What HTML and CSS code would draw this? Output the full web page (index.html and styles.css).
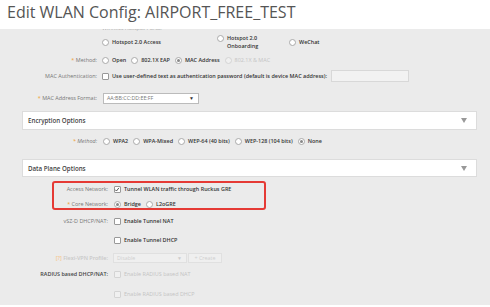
FILE: index.html
```html
<!DOCTYPE html>
<html>
<head>
<meta charset="utf-8">
<link rel="stylesheet" href="styles.css">
</head>
<body>
<h1 class="title">Edit WLAN Config: AIRPORT_FREE_TEST</h1>
<div class="panel">
  <div class="row clip-row">
    <span class="lbl"></span>
    <span class="ctl faded">Wireless Hotspot Portal</span>
  </div>
  <div class="row row-top">
    <span class="lbl"></span>
    <div class="grid3">
      <span class="opt"><i class="radio"></i>Hotspot 2.0 Access</span>
      <span class="opt opt-top"><i class="radio"></i><span>Hotspot 2.0<br>Onboarding</span></span>
      <span class="opt"><i class="radio"></i>WeChat</span>
    </div>
  </div>
  <div class="row">
    <span class="lbl"><b class="req">*</b> Method:</span>
    <div class="opts">
      <span class="opt"><i class="radio"></i>Open</span>
      <span class="opt"><i class="radio"></i>802.1X EAP</span>
      <span class="opt"><i class="radio on"></i>MAC Address</span>
      <span class="opt dis"><i class="radio"></i>802.1X &amp; MAC</span>
    </div>
  </div>
  <div class="row">
    <span class="lbl">MAC Authentication:</span>
    <div class="opts">
      <span class="opt"><i class="check"></i>Use user-defined text as authentication password (default is device MAC address):</span>
      <span class="field"></span>
    </div>
  </div>
  <div class="row row-format">
    <span class="lbl"><b class="req">*</b> MAC Address Format:</span>
    <span class="select"><span>AA:BB:CC:DD:EE:FF</span><b class="caret">&#9660;</b></span>
  </div>

  <div class="section sec-enc"><span>Encryption Options</span><b class="tri"></b></div>
  <div class="row row-enc">
    <span class="lbl"><b class="req">*</b> Method:</span>
    <div class="opts">
      <span class="opt"><i class="radio"></i>WPA2</span>
      <span class="opt"><i class="radio"></i>WPA-Mixed</span>
      <span class="opt"><i class="radio"></i>WEP-64 (40 bits)</span>
      <span class="opt"><i class="radio"></i>WEP-128 (104 bits)</span>
      <span class="opt"><i class="radio on"></i>None</span>
    </div>
  </div>

  <div class="section sec-dp"><span>Data Plane Options</span><b class="tri"></b></div>
  <div class="mark">
    <div class="row2 row-an">
      <span class="lbl2">Access Network:</span>
      <span class="opt"><i class="check on"><svg viewBox="0 0 8 8"><path d="M1.5 4.2 L3.3 6 L6.6 1.8" fill="none" stroke="#333" stroke-width="1.1"/></svg></i>Tunnel WLAN traffic through Ruckus GRE</span>
    </div>
    <div class="row2 row-cn">
      <span class="lbl2"><b class="req">*</b> Core Network:</span>
      <div class="opts">
        <span class="opt"><i class="radio on"></i>Bridge</span>
        <span class="opt"><i class="radio"></i>L2oGRE</span>
      </div>
    </div>
  </div>
  <div class="row dp r-vsz">
    <span class="lbl">vSZ-D DHCP/NAT:</span>
    <span class="opt"><i class="check"></i>Enable Tunnel NAT</span>
  </div>
  <div class="row dp r-dhcp">
    <span class="lbl"></span>
    <span class="opt"><i class="check"></i>Enable Tunnel DHCP</span>
  </div>
  <div class="row dp r-flexi faded-row">
    <span class="lbl"><b class="q">[?]</b> Flexi-VPN Profile:</span>
    <span class="select dis-select"><span>Disable</span><b class="caret">&#9660;</b></span>
    <span class="btn">+ Create</span>
  </div>
  <div class="row dp r-radius">
    <span class="lbl lbl-dark">RADIUS based DHCP/NAT:</span>
    <span class="opt dis"><i class="check"></i>Enable RADIUS based NAT</span>
  </div>
  <div class="row dp r-rdhcp">
    <span class="lbl"></span>
    <span class="opt dis"><i class="check"></i>Enable RADIUS based DHCP</span>
  </div>
</div>
</body>
</html>
```

FILE: styles.css
```css
* { box-sizing: border-box; }
html, body { margin: 0; padding: 0; background: #fff; }
body {
  width: 490px;
  height: 307px;
  overflow: hidden;
  font-family: "Open Sans", "Liberation Sans", sans-serif;
}
.title {
  margin: 0;
  height: 29px;
  padding: 2px 0 0 7px;
  font-size: 16px;
  line-height: 20px;
  font-weight: 400;
  color: #555;
}
.panel {
  background: #ebebeb;
  height: 276px;
  overflow: hidden;
  font-size: 5.45px;
  color: #333;
  font-weight: 600;
}
.row {
  display: flex;
  align-items: center;
  height: 16px;
}
.lbl {
  flex: none;
  width: 97px;
  text-align: right;
  color: #777;
  font-weight: 400;
  margin-right: 5px;
  white-space: nowrap;
}
.req { color: #f0a030; font-weight: 400; }
.clip-row { height: 10px; margin-top: -6px; }
.faded { color: #aaa; font-weight: 400; }
.row-top { height: 19px; align-items: flex-start; padding-top: 1px; }
.grid3 {
  display: grid;
  grid-template-columns: 115px 72px auto;
  line-height: 8px;
}
.opt {
  display: inline-flex;
  align-items: center;
  white-space: nowrap;
  line-height: 8px;
}
.opt-top { align-items: flex-start; }
.opt-top .radio { margin-top: 0.5px; }
.opts { display: flex; align-items: center; gap: 5px; }
.radio {
  flex: none;
  width: 7px;
  height: 7px;
  border: 1px solid #aaa;
  border-radius: 50%;
  background: #fff;
  margin-right: 3px;
  position: relative;
}
.radio.on::after {
  content: "";
  position: absolute;
  left: 1px; top: 1px;
  width: 3px; height: 3px;
  border-radius: 50%;
  background: #888;
}
.check {
  flex: none;
  width: 7px;
  height: 7px;
  border: 1px solid #999;
  background: #fff;
  margin-right: 3px;
  border-radius: 1px;
  display: inline-flex;
}
.check svg { width: 7px; height: 7px; margin: -1px 0 0 -1px; }
.dis { color: #c4c4c4; font-weight: 400; }
.dis .radio, .dis .check { border-color: #d4d4d4; background: #f0f0f0; }
.field {
  width: 78px;
  height: 12px;
  background: #f2f2f2;
  border: 1px solid #d8d8d8;
  margin-left: -1px;
}
.row-format { height: 16px; margin-top: 6px; }
.select {
  display: flex;
  align-items: center;
  justify-content: space-between;
  width: 96px;
  height: 11px;
  margin-left: 1px;
  background: #fff;
  border: 1px solid #bbb;
  padding: 0 4px 0 3px;
  color: #777;
  font-weight: 400;
  font-size: 5.3px;
}
.caret { font-size: 5px; color: #333; }
.section {
  display: flex;
  align-items: center;
  justify-content: space-between;
  margin-left: 22px;
  width: 455px;
  background: #fff;
  border: 1px solid #dcdcdc;
  padding: 0 9px 0 5px;
  color: #444;
  font-size: 6.2px;
  font-weight: 600;
}
.sec-enc { height: 19px; margin-top: 5px; }
.sec-dp { height: 18px; margin-top: 10px; }
.tri {
  width: 0; height: 0;
  border-left: 3.5px solid transparent;
  border-right: 3.5px solid transparent;
  border-top: 5px solid #999;
}
.row-enc { margin-top: 3px; }
.row-enc .lbl { font-style: italic; }
.row-enc .opts { margin-left: 1px; }
.mark {
  margin: 4px 0 0 52px;
  width: 214px;
  height: 29px;
  border: 2px solid #e53a35;
  border-radius: 3px;
  padding-top: 2px;
}
.row2 { display: flex; align-items: center; height: 8px; }
.row-cn { margin-top: 7px; }
.lbl2 {
  flex: none;
  width: 54px;
  text-align: right;
  color: #777;
  font-weight: 400;
  margin-right: 6px;
  white-space: nowrap;
}
.row.dp .lbl { width: 108px; margin-right: 6px; }
.r-vsz { margin-top: 3px; }
.r-dhcp { margin-top: 3px; }
.r-flexi { margin-top: 2px; }
.r-rdhcp { margin-top: 4px; }
.faded-row .lbl { color: #c8c8c8; font-weight: 600; }
.q { color: #f5c890; font-weight: 600; }
.dis-select {
  width: 74px;
  height: 10px;
  margin-left: -1px;
  background: #efefef;
  border-color: #e0e0e0;
  color: #d0d0d0;
}
.dis-select .caret { color: #ccc; }
.btn {
  margin-left: 1px;
  width: 34px;
  height: 10px;
  border: 1px solid #e0e0e0;
  background: #efefef;
  color: #d0d0d0;
  font-weight: 400;
  display: flex;
  align-items: center;
  justify-content: center;
}
.lbl-dark { color: #444 !important; font-weight: 600 !important; }
```
